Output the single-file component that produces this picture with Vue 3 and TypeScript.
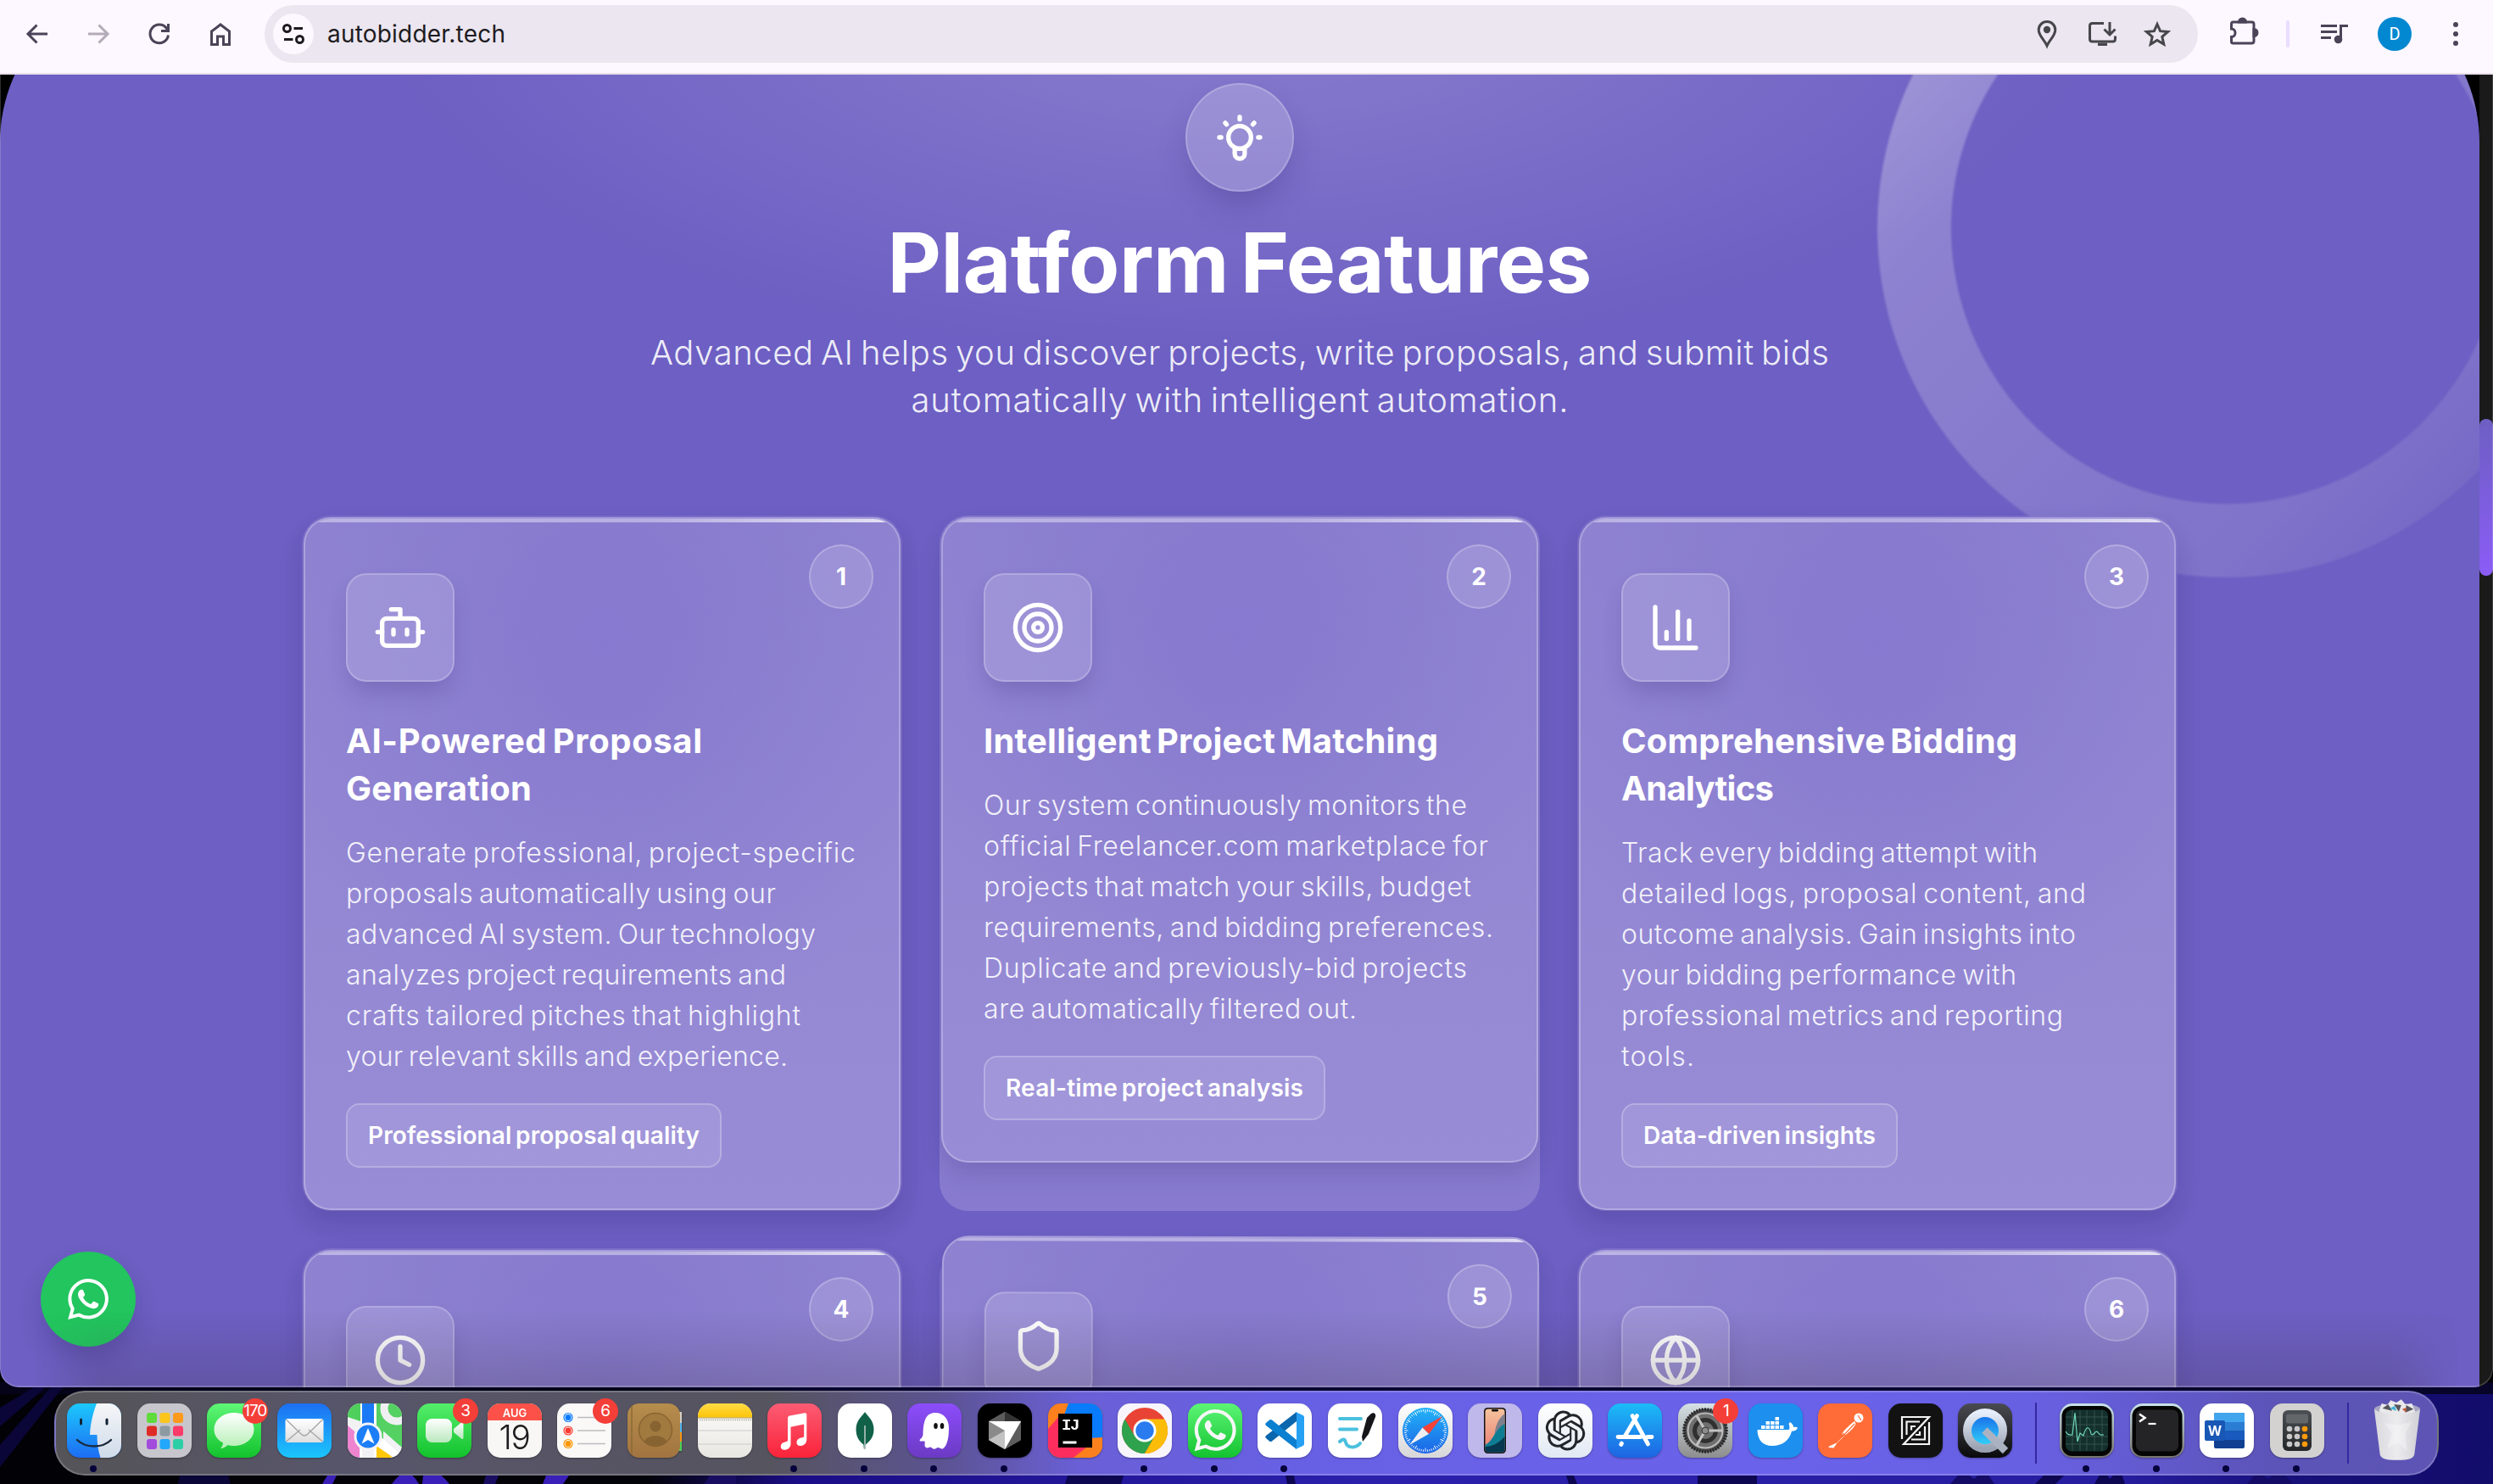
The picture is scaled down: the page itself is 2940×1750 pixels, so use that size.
<script setup lang="ts">
import type { Directive } from 'vue'

interface Line { text: string; width: number }
interface Feature {
  id: number
  icon: string
  title: Line[]
  body: Line[]
  tag?: Line
}
interface DockApp { name: string; art: string; badge?: string; running?: boolean }

// Spreads a line of text over the given width by adjusting its tracking.
const vFit: Directive<HTMLElement, number> = {
  mounted(el, { value }) {
    const count = (el.textContent ?? '').trim().length
    if (count < 2) return
    const spacing = (value - el.getBoundingClientRect().width) / (count - 1)
    el.style.letterSpacing = `${spacing.toFixed(3)}px`
    el.style.marginRight = `${(-spacing).toFixed(3)}px`
  },
}

const features: Feature[] = [
  {
    id: 1,
    icon: '<path d="M12 8V4H8"/><rect width="16" height="12" x="4" y="8" rx="2"/><path d="M2 14h2M20 14h2M15 13v2M9 13v2"/>',
    title: [{ text: 'AI-Powered Proposal', width: 420 }, { text: 'Generation', width: 219 }],
    body: [
      { text: 'Generate professional, project-specific', width: 601 },
      { text: 'proposals automatically using our', width: 507 },
      { text: 'advanced AI system. Our technology', width: 554 },
      { text: 'analyzes project requirements and', width: 519 },
      { text: 'crafts tailored pitches that highlight', width: 536 },
      { text: 'your relevant skills and experience.', width: 521 },
    ],
    tag: { text: 'Professional proposal quality', width: 391 },
  },
  {
    id: 2,
    icon: '<circle cx="12" cy="12" r="10"/><circle cx="12" cy="12" r="6"/><circle cx="12" cy="12" r="2"/>',
    title: [{ text: 'Intelligent Project Matching', width: 536 }],
    body: [
      { text: 'Our system continuously monitors the', width: 570 },
      { text: 'official Freelancer.com marketplace for', width: 595 },
      { text: 'projects that match your skills, budget', width: 575 },
      { text: 'requirements, and bidding preferences.', width: 601 },
      { text: 'Duplicate and previously-bid projects', width: 570 },
      { text: 'are automatically filtered out.', width: 440 },
    ],
    tag: { text: 'Real-time project analysis', width: 351 },
  },
  {
    id: 3,
    icon: '<path d="M3 3v16a2 2 0 0 0 2 2h16"/><path d="M18 17V9M13 17V5M8 17v-3"/>',
    title: [{ text: 'Comprehensive Bidding', width: 467 }, { text: 'Analytics', width: 180 }],
    body: [
      { text: 'Track every bidding attempt with', width: 491 },
      { text: 'detailed logs, proposal content, and', width: 548 },
      { text: 'outcome analysis. Gain insights into', width: 536 },
      { text: 'your bidding performance with', width: 466 },
      { text: 'professional metrics and reporting', width: 521 },
      { text: 'tools.', width: 86 },
    ],
    tag: { text: 'Data-driven insights', width: 274 },
  },
  { id: 4, icon: '<circle cx="12" cy="12" r="10"/><path d="M12 6v6l4 2"/>', title: [], body: [] },
  {
    id: 5,
    icon: '<path d="M20 13c0 5-3.5 7.5-7.66 8.95a1 1 0 0 1-.67-.01C7.5 20.5 4 18 4 13V6a1 1 0 0 1 1-1c2 0 4.5-1.2 6.24-2.72a1.17 1.17 0 0 1 1.52 0C14.51 3.81 17 5 19 5a1 1 0 0 1 1 1z"/>',
    title: [],
    body: [],
  },
  {
    id: 6,
    icon: '<circle cx="12" cy="12" r="10"/><path d="M12 2a14.5 14.5 0 0 0 0 20 14.5 14.5 0 0 0 0-20"/><path d="M2 12h20"/>',
    title: [],
    body: [],
  },
]

const plate = (fill: string, extra = '') => `<rect width="64" height="64" rx="15" fill="${fill}" ${extra}/>`
const grad = (id: string, a: string, b: string) =>
  `<linearGradient id="${id}" x1="0" y1="0" x2="0" y2="1"><stop stop-color="${a}"/><stop offset="1" stop-color="${b}"/></linearGradient>`

const waGlyph =
  '<path d="M17.472 14.382c-.297-.149-1.758-.867-2.03-.967-.273-.099-.471-.148-.67.15-.197.297-.767.966-.94 1.164-.173.199-.347.223-.644.075-.297-.15-1.255-.463-2.39-1.475-.883-.788-1.48-1.761-1.653-2.059-.173-.297-.018-.458.13-.606.134-.133.298-.347.446-.52.149-.174.198-.298.298-.497.099-.198.05-.371-.025-.52-.075-.149-.669-1.612-.916-2.207-.242-.579-.487-.5-.669-.51-.173-.008-.371-.01-.57-.01-.198 0-.52.074-.792.372-.272.297-1.04 1.016-1.04 2.479 0 1.462 1.065 2.875 1.213 3.074.149.198 2.096 3.2 5.077 4.487.709.306 1.262.489 1.694.625.712.227 1.36.195 1.871.118.571-.085 1.758-.719 2.006-1.413.248-.694.248-1.289.173-1.413-.074-.124-.272-.198-.57-.347m-5.421 7.403h-.004a9.87 9.87 0 01-5.031-1.378l-.361-.214-3.741.982.998-3.648-.235-.374a9.86 9.86 0 01-1.51-5.26c.001-5.45 4.436-9.884 9.888-9.884 2.64 0 5.122 1.03 6.988 2.898a9.825 9.825 0 012.893 6.994c-.003 5.45-4.437 9.884-9.885 9.884m8.413-18.297A11.815 11.815 0 0012.05 0C5.495 0 .16 5.335.157 11.892c0 2.096.547 4.142 1.588 5.945L.057 24l6.305-1.654a11.882 11.882 0 005.683 1.448h.005c6.554 0 11.89-5.335 11.893-11.893a11.821 11.821 0 00-3.48-8.413z"/>'

const padColors = ['#5fdb3c', '#fbc51b', '#fb9a1c', '#df2a25', '#8d9aa1', '#fd3b68', '#a24bdc', '#22a7fb', '#2ccfa5']
const launchDots = padColors
  .map((c, i) => `<rect x="${11 + (i % 3) * 15.5}" y="${11 + Math.floor(i / 3) * 15.5}" width="12" height="12" rx="3" fill="${c}"/>`)
  .join('')
const gearTeeth = Array.from({ length: 48 }, (_, i) => `<path d="M32 5v4" transform="rotate(${i * 7.5} 32 32)"/>`).join('')
const safariTicks = Array.from({ length: 60 }, (_, i) => `<path d="M32 7v${i % 5 ? 2.5 : 4.5}" transform="rotate(${i * 6} 32 32)"/>`).join('')
const openaiMark =
  '<path d="M22.282 9.821a5.985 5.985 0 0 0-.516-4.91 6.046 6.046 0 0 0-6.51-2.9A6.065 6.065 0 0 0 4.981 4.18a5.985 5.985 0 0 0-3.998 2.9 6.046 6.046 0 0 0 .743 7.097 5.98 5.98 0 0 0 .51 4.911 6.051 6.051 0 0 0 6.515 2.9A5.985 5.985 0 0 0 13.26 24a6.056 6.056 0 0 0 5.772-4.206 5.99 5.99 0 0 0 3.997-2.9 6.056 6.056 0 0 0-.747-7.073zM13.26 22.43a4.476 4.476 0 0 1-2.876-1.04l.141-.081 4.779-2.758a.795.795 0 0 0 .392-.681v-6.737l2.02 1.168a.071.071 0 0 1 .038.052v5.583a4.504 4.504 0 0 1-4.494 4.494zM3.6 18.304a4.47 4.47 0 0 1-.535-3.014l.142.085 4.783 2.759a.771.771 0 0 0 .78 0l5.843-3.369v2.332a.08.08 0 0 1-.033.062L9.74 19.95a4.5 4.5 0 0 1-6.14-1.646zM2.34 7.896a4.485 4.485 0 0 1 2.366-1.973V11.6a.766.766 0 0 0 .388.676l5.815 3.355-2.02 1.168a.076.076 0 0 1-.071 0l-4.83-2.786A4.504 4.504 0 0 1 2.34 7.872zm16.597 3.855l-5.833-3.387L15.119 7.2a.076.076 0 0 1 .071 0l4.83 2.791a4.494 4.494 0 0 1-.676 8.105v-5.678a.79.79 0 0 0-.407-.667zm2.01-3.023l-.141-.085-4.774-2.782a.776.776 0 0 0-.785 0L9.409 9.23V6.897a.066.066 0 0 1 .028-.061l4.83-2.787a4.5 4.5 0 0 1 6.68 4.66zm-12.64 4.135l-2.02-1.164a.08.08 0 0 1-.038-.057V6.075a4.5 4.5 0 0 1 7.375-3.453l-.142.08L8.704 5.46a.795.795 0 0 0-.393.681zm1.097-2.365l2.602-1.5 2.607 1.5v2.999l-2.597 1.5-2.607-1.5z"/>'
const calcKeys = Array.from({ length: 9 }, (_, i) => `<circle cx="${23 + (i % 3) * 9}" cy="${30 + Math.floor(i / 3) * 9}" r="3.300" fill="${i % 3 === 2 ? '#ff9a0a' : '#c9c9c9'}"/>`).join('')

const mainApps: DockApp[] = [
  {
    name: 'finder',
    running: true,
    art: `<defs>${grad('fi', '#1cc8fd', '#1d6df3')}${grad('fw', '#f6f6f8', '#cfdbea')}<clipPath id="fc"><rect width="64" height="64" rx="15"/></clipPath></defs><g clip-path="url(#fc)"><rect width="64" height="64" fill="url(#fi)"/><path d="M35 0C30 13 27.500 25 27 37h8.500c0 9 1 18 4 27H64V0z" fill="url(#fw)"/></g><path d="M16.500 19v5M47 19v5" stroke="#123" stroke-width="3" stroke-linecap="round"/><path d="M12 43c10 10 30 10 40 0" fill="none" stroke="#1b2a3c" stroke-width="2.400" stroke-linecap="round"/>`,
  },
  { name: 'launchpad', art: plate('#c7c6cd') + launchDots },
  {
    name: 'messages',
    badge: '170',
    art: `<defs>${grad('ms', '#5ff777', '#12c22c')}${grad('mb', '#ffffff', '#b5efb5')}</defs>${plate('url(#ms)')}<path d="M32 11c13 0 23.500 8.500 23.500 19.500S45 50 32 50c-3 0-5-.300-7.500-1-2 2-5 4-8.500 4 2-2.200 3-4 3-6.500C12 43 8.500 37 8.500 30.500 8.500 19.500 19 11 32 11z" fill="url(#mb)"/>`,
  },
  {
    name: 'mail',
    art: `<defs>${grad('ml', '#1d6ff2', '#1bc6fd')}${grad('me', '#ffffff', '#dedede')}</defs>${plate('url(#ml)')}<rect x="9.500" y="18" width="45" height="28" rx="3" fill="url(#me)"/><path d="M10.500 45 27 31M53.500 45 37 31M10.500 19l17.500 17c2.500 2.500 5.500 2.500 8 0l17.500-17" fill="none" stroke="#a5a5a8" stroke-width="1.300"/>`,
  },
  {
    name: 'maps',
    art: `<defs><clipPath id="mp"><rect width="64" height="64" rx="15"/></clipPath></defs><g clip-path="url(#mp)"><rect width="64" height="64" fill="#f2f2f5"/><path d="M0 0h18v22L0 16z" fill="#4fcf5c"/><path d="M0 26l14 12v26H0z" fill="#ee83d0"/><path d="M32 0h10v64L32 50z" fill="#4fcf5c"/><path d="M30 0h34v52L30 22z" fill="#54d162"/><circle cx="58" cy="6" r="15" fill="none" stroke="#f0f0f2" stroke-width="9"/><path d="M33 34l31 28v2H33z" fill="#fff"/><path d="M34 50l20 14H34z" fill="#fdc80a"/><path d="M17 0h14v40H17z" fill="#1a7af5"/><path d="M15 0h2v64h-2zM31 0h3v64h-3z" fill="#fff"/></g><circle cx="24" cy="39" r="15" fill="#1c7ef7" stroke="#f3f3f6" stroke-width="3"/><path d="M24 29l7.500 18.500L24 43l-7.500 4.500z" fill="#fff"/>`,
  },
  {
    name: 'facetime',
    badge: '3',
    art: `<defs>${grad('ft', '#55ee6c', '#12c22c')}${grad('fb', '#ffffff', '#b9e8bd')}</defs>${plate('url(#ft)')}<rect x="10" y="18" width="31" height="28" rx="7.500" fill="url(#fb)"/><path d="M43 30l9-7.500c1.300-1 2.500-.4 2.500 1v17c0 1.500-1.200 2-2.500 1L43 34z" fill="url(#fb)"/>`,
  },
  {
    name: 'calendar',
    art: `<defs><clipPath id="cl"><rect width="64" height="64" rx="15"/></clipPath></defs><g clip-path="url(#cl)"><rect width="64" height="64" fill="#f8f7f5"/><rect width="64" height="20" fill="#fb5148"/></g><text x="32" y="15.500" text-anchor="middle" font-family="Inter, sans-serif" font-weight="600" font-size="13" fill="#fff">AUG</text><text x="31.500" y="54" text-anchor="middle" font-family="Inter, sans-serif" font-weight="300" font-size="39" letter-spacing="-1.500" fill="#1d1d1f">19</text>`,
  },
  {
    name: 'reminders',
    badge: '6',
    art: `${plate('#faf9f8')}<path d="M24 16.500h33M24 32h33M24 47.500h33" stroke="#bdbdbf" stroke-width="1.600"/><g stroke-width="1.200" fill="#fff"><circle cx="13" cy="16.500" r="5" stroke="#0a7bff"/><circle cx="13" cy="32" r="5" stroke="#fb3b30"/><circle cx="13" cy="47.500" r="5" stroke="#fb9500"/></g><circle cx="13" cy="16.500" r="3.500" fill="#0a7bff"/><circle cx="13" cy="32" r="3.500" fill="#fb3b30"/><circle cx="13" cy="47.500" r="3.500" fill="#fb9500"/>`,
  },
  {
    name: 'contacts',
    art: `<path d="M56 10h8v13h-8z" fill="#d5cfc4"/><path d="M56 23h8v11h-8z" fill="#4fb4ee"/><path d="M56 34h8v11h-8z" fill="#f79414"/><path d="M56 45h8v11h-8z" fill="#4bce5a"/><defs>${grad('ct', '#b58d4c', '#a27440')}</defs><rect width="62" height="64" rx="14" fill="url(#ct)"/><path d="M5 3v58" stroke="#8d6a36" stroke-width="1.500"/><g fill="#a17a40" stroke="#8a6531" stroke-width="1.600"><circle cx="33" cy="31" r="19.500"/></g><circle cx="33" cy="27" r="6.500" fill="#876332"/><path d="M20 45c2-9 24-9 26 0-7 7-19 7-26 0z" fill="#876332"/>`,
  },
  {
    name: 'notes',
    art: `<defs><clipPath id="nt"><rect width="64" height="64" rx="15"/></clipPath>${grad('ny', '#ffdb45', '#fcc408')}${grad('nw', '#fcfcfb', '#e9e7e1')}</defs><g clip-path="url(#nt)"><rect width="64" height="64" fill="url(#nw)"/><rect width="64" height="16.500" fill="url(#ny)"/><path d="M0 17h64" stroke="#b09344" stroke-width="1"/><path d="M2 19.500h62" stroke="#9f9f9f" stroke-width="1.600" stroke-dasharray="1.200 1.400"/><path d="M0 32h64M0 48h64" stroke="#cbcbcb" stroke-width="1"/></g>`,
  },
  {
    name: 'music',
    running: true,
    art: `<defs>${grad('mu', '#fb5c74', '#fa2339')}</defs>${plate('url(#mu)')}<path d="M24 17.500c0-1.700.9-2.600 2.300-2.900l17.500-3.400c1.500-.3 2.500.5 2.500 2v29.300c0 4.500-3 7-6.800 7.500-3 .4-5-1.300-5-4 0-2.800 1.800-4.700 5-5.400l2.300-.5c1-.200 1.400-.8 1.400-1.800V24.500L27.500 27.700v20c0 4-2.800 6.600-6.800 7-3 .3-5-1.300-5-4 0-2.800 1.800-4.600 5-5.300l1.800-.4c1-.3 1.500-.8 1.500-1.900z" fill="#fff"/>`,
  },
  {
    name: 'mongodb',
    running: true,
    art: `${plate('#fff')}<path d="M32 10c2 4 10.500 9 10.500 20.500C42.500 41 36 46 32.800 48.500l-.4 5h-1.600l-.4-5C27 46 21.500 41 21.500 30.500 21.500 19 30 14 32 10z" fill="#116149"/><path d="M32 26v28" stroke="#b8c4c2" stroke-width="1.600"/>`,
  },
  {
    name: 'ghostty',
    running: true,
    art: `<defs>${grad('gh', '#8c4dfb', '#6b3ac4')}</defs>${plate('url(#gh)')}<path d="M33 11c9.500 0 16 7 16 18 0 10-1.500 20-6.500 24-2.500 1.700-4-1-6-1s-3.500 2.500-6 1.500c-2-.8-1.500-2-3.500-2-1.500 0-3 1.800-5 .5-2.500-1.700-1-4.500-1.300-7-.6-1.500-5.200.5-6-1-.9-1.800 3.500-3 3.800-7.500C18.900 20 22 11 33 11z" fill="#fff"/><ellipse cx="33.500" cy="26.500" rx="2.300" ry="3.500" fill="#111"/><ellipse cx="41" cy="26.500" rx="2.300" ry="3.500" fill="#111"/>`,
  },
  {
    name: 'cursor',
    running: true,
    art: `${plate('#000')}<path d="M32 10l19 11v22L32 54 13 43V21z" fill="#8a8a8a"/><path d="M32 10l19 11H13z" fill="#5b5b5b"/><path d="M32 10v11h19z" fill="#333"/><path d="M13 21l19 11v22L13 43z" fill="#8a8a8a"/><path d="M13 43l19-11v22z" fill="#c2c2c2"/><path d="M51 21v22L32 54z" fill="#5d5d5d"/><path d="M13 21h38L32 54V32z" fill="#fff"/>`,
  },
  {
    name: 'intellij',
    art: `<defs><clipPath id="ij"><rect width="64" height="64" rx="15"/></clipPath></defs><g clip-path="url(#ij)"><rect width="64" height="64" fill="#fc801d"/><path d="M0 30l14-16 36 34-20 16H0z" fill="#fd2d5e"/><path d="M24 0l-12 32 18 10 34-2V0z" fill="#087cfa"/><path d="M30 64l34-24v24z" fill="#fc801d"/></g><rect x="12" y="12" width="40" height="40" fill="#000"/><path d="M17.500 46h16" stroke="#fff" stroke-width="3"/><text x="16" y="31" font-family="Liberation Mono, monospace" font-weight="700" font-size="19" letter-spacing="-1.500" fill="#fff">IJ</text>`,
  },
  {
    name: 'chrome',
    running: true,
    art: `${plate('#f7f5fb')}<circle cx="32" cy="32" r="27" fill="#e94335"/><path d="M8.600 18.500A27 27 0 0 0 32 59l11.700-20.200L32 32 20.300 38.800z" fill="#2fa24d"/><path d="M32 18.500h23.400A27 27 0 0 1 32 59l11.700-20.200z" fill="#fbbd09"/><circle cx="32" cy="32" r="13.500" fill="#fff"/><circle cx="32" cy="32" r="10.700" fill="#2a7bf0"/>`,
  },
  {
    name: 'whatsapp',
    running: true,
    art: `<defs>${grad('wa', '#5cf575', '#14c330')}</defs>${plate('url(#wa)')}<g transform="translate(7.500 7) scale(2.050)" fill="#f7f7f7">${waGlyph}</g>`,
  },
  {
    name: 'vscode',
    running: true,
    art: `${plate('#fff')}<path d="M46 10v11L17 44.500c-1 .8-2 .8-3 0L10 41c-1-1-1-2 0-3z" fill="#0a66ad"/><path d="M46 54V43L17 19.500c-1-.8-2-.8-3 0L10 23c-1 1-1 2 0 3z" fill="#0b7fd0"/><path d="M44 9.500l9.500 4.500c1 .5 1.500 1.300 1.500 2.500v31c0 1.200-.5 2-1.500 2.500L44 54.500c1.300-1 2-1.500 2-3.500V13c0-2-.7-2.500-2-3.500z" fill="#25a0f3"/>`,
  },
  {
    name: 'freeform',
    art: `${plate('#fff')}<g stroke="#4bc0de" stroke-width="4" stroke-linecap="round" fill="none"><path d="M14 18h25M14 30.500h20"/><path d="M14 45c4-4 6-3 7 1 1.500 6 11 8 17 1"/></g><path d="M51 12c3-2 6 0 5 4l-8 20-7 9-1-6 6-22z" fill="#15151a"/>`,
  },
  {
    name: 'safari',
    art: `<defs>${grad('sf', '#22b4f8', '#1b64e6')}${grad('sp', '#ffffff', '#d7d7d9')}</defs>${plate('url(#sp)')}<circle cx="32" cy="32" r="27" fill="url(#sf)"/><g stroke="#fff" stroke-width=".9">${safariTicks}</g><path d="M52 15L36 36l-7.500-7.500z" fill="#f5423b"/><path d="M13 49l15.500-20.500L36 36z" fill="#f0f0f2"/>`,
  },
  {
    name: 'iphone-mirroring',
    art: `<defs>${grad('ip', '#f5c39c', '#e97b74')}</defs>${plate('#bfb8ea')}<rect x="19" y="5" width="26" height="54" rx="4.500" fill="#111"/><rect x="20.500" y="6.500" width="23" height="51" rx="3.500" fill="url(#ip)"/><path d="M43.500 12v14c-6 3-9 8-12 14 0-12 4-22 12-28z" fill="#7e7f8d"/><path d="M43.500 24v30c0 2-1.500 3.500-3.500 3.500H24c-2 0-3.500-1.500-3.500-3.500v-5C31 43 32 30 43.500 24z" fill="#0e7d93"/><path d="M20.500 51c8 0 16-4 23-12v15c0 2-1.500 3.500-3.500 3.500H24c-2 0-3.500-1.500-3.500-3.500z" fill="#06384f"/><rect x="28" y="7" width="8" height="2.500" rx="1.200" fill="#111"/>`,
  },
  { name: 'chatgpt', art: `<defs>${grad('gp', '#ffffff', '#e2e9f3')}</defs>${plate('url(#gp)')}<g transform="translate(8.500 8.500) scale(1.960)" fill="#22262b">${openaiMark}</g>` },
  {
    name: 'app-store',
    art: `<defs>${grad('as', '#1cbcf8', '#1d63e3')}</defs>${plate('url(#as)')}<g stroke="#fff" stroke-width="4.800" stroke-linecap="round"><path d="M34.500 14.500 20 39M29 14.500 47.500 48M12 39.500h27M47 39.500h5M16.500 47l-.8 1.500"/></g>`,
  },
  {
    name: 'settings',
    badge: '1',
    art: `<defs>${grad('se', '#d5e1e6', '#8d8d8d')}</defs>${plate('url(#se)')}<circle cx="32" cy="32" r="26" fill="#4b4b4d"/><g stroke="#222" stroke-width="1.500">${gearTeeth}</g><circle cx="32" cy="32" r="20.500" fill="#6f6f70" stroke="#b9b9b9" stroke-width="2.200"/><circle cx="32" cy="32" r="12.500" fill="none" stroke="#303030" stroke-width="5"/><g stroke="#c4c4c4" stroke-width="3"><path d="M32 32h20M32 32 22 14.700M32 32 22 49.300"/></g><circle cx="32" cy="32" r="4" fill="#8d8d8d" stroke="#333"/>`,
  },
  {
    name: 'docker',
    art: `${plate('#1d8fee')}<path d="M10.500 31h37c1.500-1.500 1-4.500 0-7l1.500-2c3 2 4 4 4 6 2-.5 4-.2 5 .8-1.500 3-4 4-7 4C48 44 40 50 28 50S10.500 42 10.500 31z" fill="#fff"/><g fill="#fff"><path d="M15 26h4.500v4H15zM20.500 26H25v4h-4.500zM26 26h4.500v4H26zM31.500 26H36v4h-4.500zM37 26h4.500v4H37zM20.500 21H25v4h-4.500zM26 21h4.500v4H26zM31.500 21H36v4h-4.500zM31.500 16H36v4h-4.500z"/></g>`,
  },
  {
    name: 'postman',
    art: `${plate('#ff6c37')}<circle cx="48" cy="17" r="5.500" fill="#fff"/><path d="M43 21c-3 2-12 10-15 15l3 1.500-9 9-9 4-.5 1.500 6 .5 4-6 9.500-9c4-3 11-9 12.500-13.500z" fill="#fff"/><path d="M47 14l4 6M28 40l15-16M32 38l-3-3" stroke="#ff6c37" stroke-width="1.200"/>`,
  },
  {
    name: 'zed',
    art: `${plate('#121212')}<g fill="none" stroke="#f4f4f4" stroke-width="2.200"><path d="M16 42V16h32L18 48h30V22"/><path d="M21.500 37V21.500H37M43 27v15.500H27"/><path d="M27 31.500V27h5M37 33v4h-5"/></g>`,
  },
  {
    name: 'quicktime',
    art: `<defs>${grad('qt', '#4a4b52', '#0a0a0c')}${grad('qr', '#e6eefb', '#9ba3b3')}${grad('qb', '#1565e8', '#35dcfb')}</defs>${plate('url(#qt)')}<circle cx="32" cy="32" r="21" fill="url(#qb)" stroke="url(#qr)" stroke-width="10"/><path d="M31.500 31.500 56 56" stroke="#aab2c1" stroke-width="9"/>`,
  },
]

const recentApps: DockApp[] = [
  {
    name: 'activity-monitor',
    art: `<defs>${grad('am', '#c8e2ea', '#77736c')}</defs>${plate('url(#am)')}<rect x="2.500" y="3" width="59" height="59" rx="12" fill="#050505"/><rect x="7" y="7.500" width="50" height="49" rx="7" fill="#14302d"/><path d="M15 8v48M24 8v48M32 8v48M41 8v48M50 8v48M7 16h50M7 25h50M7 39h50M7 48h50" stroke="#3a5a56" stroke-width=".8"/><path d="M7 33c3 5 5 4 8 4l3-26 3 34 3-10 4 3c3-12 7-12 9-2 3 4 5-6 8-2s3 3 7 3" fill="none" stroke="#6fd8bb" stroke-width="1.200"/>`,
  },
  {
    name: 'terminal',
    art: `<defs>${grad('tm', '#c8e2ea', '#77736c')}</defs>${plate('url(#tm)')}<rect x="2.500" y="3" width="59" height="59" rx="12" fill="#050505"/><rect x="7" y="7.500" width="50" height="49" rx="7" fill="#242426"/><path d="M11 12.500l6.500 4.500-6.500 4.500" fill="none" stroke="#fff" stroke-width="2.600"/><path d="M21.500 24h9" stroke="#fff" stroke-width="2.200"/>`,
  },
  {
    name: 'word',
    art: `${plate('#fff')}<rect x="17" y="11" width="36" height="42" rx="2" fill="#103f91"/><path d="M17 13a2 2 0 0 1 2-2h32a2 2 0 0 1 2 2v9H17z" fill="#41a5ee"/><path d="M17 22h36v10.500H17z" fill="#2b7cd3"/><path d="M17 32.500h36V43H17z" fill="#185abd"/><rect x="6" y="20" width="24" height="24" rx="2" fill="#1857b5"/><text x="18" y="37.500" text-anchor="middle" font-family="Open Sans, sans-serif" font-weight="700" font-size="16" fill="#fff">W</text>`,
  },
  {
    name: 'calculator',
    art: `<defs>${grad('ca', '#4c5054', '#242628')}</defs>${plate('#d3d2d0')}<rect x="15" y="8" width="34" height="48" rx="6" fill="url(#ca)"/><rect x="19" y="12.500" width="26" height="11" rx="2.500" fill="#63676a"/>${calcKeys}`,
  },
]
</script>

<template>
  <div class="screen">
    <svg class="wallpaper" viewBox="0 0 2940 120" preserveAspectRatio="none">
      <defs>
        <linearGradient id="wp" x1="0" x2="1" y1="0" y2="0">
          <stop offset="0" stop-color="#020206" />
          <stop offset=".26" stop-color="#03030a" />
          <stop offset=".32" stop-color="#1b0d86" />
          <stop offset=".55" stop-color="#2a20ac" />
          <stop offset=".85" stop-color="#261d9f" />
          <stop offset=".92" stop-color="#17107a" />
          <stop offset="1" stop-color="#120c6a" />
        </linearGradient>
      </defs>
      <rect width="2940" height="120" fill="url(#wp)" />
      <rect width="2940" height="14" fill="#05041c" opacity=".85" />
      <path d="M0 74 60 6h14L0 100zM0 30l40-24h14L0 52zM210 120l4-20h52l6 20z" fill="#0b0638" />
      <path d="M380 120l12-20h10l-10 20zM462 120q18-26 32 0zM498 120l2-20q18 4 30 20zM640 120l8-20h30l-14 20z" fill="#3a20b8" />
      <path d="M570 120l6-20h16l-8 20zM830 120l14-20h24v20z" fill="#190d62" />
      <path d="M1256 120l6-20h66l-6 20zM1518 120l-4-20h10l4 20zM1850 120l-6-20h8l8 20zM2002 100h70v20h-70zM2400 120l20-20h24l-20 20zM2470 120l10-18 8 12 12-12 6 18z" fill="#0d0650" />
      <path d="M2300 120l14-16 14 10 12-12 12 18zM2650 120l12-14 14 8 12-12 16 18z" fill="#140b66" />
    </svg>

    <div class="window">
      <div class="toolbar">
        <svg class="tool back" viewBox="0 0 24 24"><path d="M11.500 1.500 1 12l10.500 10.500M2 12h22" /></svg>
        <svg class="tool forward" viewBox="0 0 24 24"><path d="M12.500 1.500 23 12 12.500 22.500M22 12H0" /></svg>
        <svg class="tool reload" viewBox="0 0 24 24"><path d="M22.500 13.500A10.800 10.800 0 1 1 20.500 5.500L22.500 8M22.500 0v8.500H14" /></svg>
        <svg class="tool home" viewBox="0 0 24 27"><path d="M1.500 25.500V10L12 2l10.500 8v15.500H15.500V16h-7v9.500z" /></svg>
        <div class="omnibox">
          <span class="site-info">
            <svg viewBox="0 0 26 24"><circle cx="5.500" cy="5.500" r="4" /><path d="M13.500 5.500H24" /><circle cx="20.500" cy="18.500" r="4" /><path d="M2 18.500h10.500" /></svg>
          </span>
          <span v-fit="210" class="url">autobidder.tech</span>
          <span class="omni-icons">
            <svg width="24" height="32" viewBox="0 0 24 32"><path d="M12 1.500c5.500 0 9.800 4.300 9.800 9.700C21.800 18 15 23 12 30 9 23 2.200 18 2.200 11.200c0-5.400 4.300-9.700 9.800-9.700z" /><circle cx="12" cy="11" r="4.200" fill="currentColor" stroke="none" /></svg>
            <svg width="34" height="28" viewBox="0 0 34 28"><path d="M19 1.500H5.500c-2 0-3 1-3 3v15.500c0 2 1 3 3 3h24c2 0 3-1 3-3V16.500" /><path d="M26 0v14M19.500 8.500 26 15l6.500-6.500" /><path d="M12 24.500h11V28H12z" fill="currentColor" stroke="none" /></svg>
            <svg width="32" height="30" viewBox="0 0 32 30"><path d="M16 3.500l3.600 8.200 9 .8-6.800 5.900 2 8.700-7.800-4.600-7.800 4.600 2-8.700-6.800-5.900 9-.8z" /></svg>
          </span>
        </div>
        <svg class="puzzle" width="34" height="34" viewBox="0 0 34 34"><path d="M4.500 6h22c1.500 0 2.500 1 2.500 2.500v20c0 1.500-1 2.500-2.500 2.500h-22C3 31 2.500 30.500 2.500 29v-5.500c6 0 6-9.500 0-9.500V8.500C2.500 7 3 6 4.500 6z" /><path d="M11.500 6a4 4 0 0 1 8 0zM29 14.500a4 4 0 0 1 0 8z" fill="currentColor" /></svg>
        <span class="divider"></span>
        <svg class="queue" width="32" height="24" viewBox="0 0 32 24"><path d="M0 2.500h19M0 9.500h19M0 16.500h12M23.500 18V2.500H32" /><circle cx="20.500" cy="18.500" r="4.800" fill="currentColor" stroke="none" /></svg>
        <span class="avatar">D</span>
        <span class="kebab"><i></i><i></i><i></i></span>
      </div>

      <div class="viewport">
        <section class="features">
          <div class="ring"></div>
          <header class="intro">
            <span class="intro-icon">
              <svg viewBox="0 0 24 24" fill="none" stroke="#fff" stroke-width="2" stroke-linecap="round" stroke-linejoin="round">
                <circle cx="12" cy="12" r="5" />
                <path d="M9.800 17v2.200a2.200 2.200 0 0 0 4.400 0V17zM12 3v1M5.600 5.600l.6.700M18.400 5.600l-.6.700M3 12h.8M20.200 12h.8" />
              </svg>
            </span>
            <h2><span v-fit="831">Platform Features</span></h2>
            <p>
              <span v-fit="1390">Advanced AI helps you discover projects, write proposals, and submit bids</span>
              <span v-fit="775">automatically with intelligent automation.</span>
            </p>
          </header>

          <div class="grid">
            <div v-for="f in features" :key="f.id" class="cell">
              <article class="card" :class="`card-${f.id}`">
                <span class="number">{{ f.id }}</span>
                <span class="icon-box"><svg viewBox="0 0 24 24" v-html="f.icon"></svg></span>
                <h3 v-if="f.title.length"><span v-for="l in f.title" :key="l.text" v-fit="l.width">{{ l.text }}</span></h3>
                <p v-if="f.body.length"><span v-for="l in f.body" :key="l.text" v-fit="l.width">{{ l.text }}</span></p>
                <div v-if="f.tag" class="tag"><span v-fit="f.tag.width">{{ f.tag.text }}</span></div>
              </article>
            </div>
          </div>
        </section>
        <div class="scrollbar"><div class="thumb"></div></div>
        <div class="chat"><svg viewBox="0 0 24 24" v-html="waGlyph"></svg></div>
        <div class="dock-shade"></div>
      </div>
    </div>

    <div class="dock">
      <div v-for="a in mainApps" :key="a.name" class="slot">
        <svg class="app" viewBox="0 0 64 64" v-html="a.art"></svg>
        <b v-if="a.badge" class="badge">{{ a.badge }}</b>
        <i v-if="a.running" class="dot"></i>
      </div>
      <span class="rule"></span>
      <div v-for="a in recentApps" :key="a.name" class="slot">
        <svg class="app" viewBox="0 0 64 64" v-html="a.art"></svg>
        <i class="dot"></i>
      </div>
      <span class="rule"></span>
      <svg class="trash" viewBox="0 0 60 76">
        <defs><linearGradient id="tr" x1="0" x2="1" y1="0" y2="0"><stop stop-color="#d9d9de" /><stop offset=".5" stop-color="#ececee" /><stop offset="1" stop-color="#cfcfd6" /></linearGradient></defs>
        <ellipse cx="30" cy="13" rx="28" ry="7" fill="#a7a5c4" />
        <path d="M8 15l3-9 7 2 4-6 7 3 6-4 5 6 8-1 4 10-9 6H14z" fill="#e9e9ec" />
        <path d="M12 12l7-5 5 8zM26 7l9 1-3 8zM41 8l9 5-10 4z" fill="#55555c" />
        <path d="M21 12l6-3 2 6z" fill="#3bb2d6" /><path d="M36 13l5-2v6z" fill="#c55a3a" />
        <path d="M2 13c8 8 48 8 56 0l-7 55c-1 5-6 7-21 7S10 73 9 68z" fill="url(#tr)" />
        <path d="M14 30l10 12-6 18 14-6 10 10-2-22 8-14-14 4z" fill="#fff" opacity=".3" />
      </svg>
    </div>
  </div>
</template>

<style>
body { overflow: hidden; background: #000; }
</style>

<style scoped>
* { box-sizing: border-box; }
.screen {
  position: relative;
  width: 2940px;
  height: 1750px;
  overflow: hidden;
  background: #000;
  font-family: Inter, "Open Sans", sans-serif;
  display: flex;
  flex-direction: column;
}
.wallpaper { position: absolute; left: 0; bottom: 0; width: 2940px; height: 120px; }
.window {
  position: relative;
  height: 1636px;
  flex: none;
  border-radius: 0 0 22px 22px;
  overflow: hidden;
  background: #000;
}
.window::after {
  content: "";
  position: absolute;
  inset: 0;
  border-radius: 0 0 22px 22px;
  box-shadow: inset 0 -1px 0 1px rgba(255, 255, 255, .18);
  pointer-events: none;
  clip-path: inset(88px 0 0 0);
}

/* Browser toolbar */
.toolbar {
  height: 88px;
  background: #fdf7ff;
  border-bottom: 2px solid #e9e0ec;
  display: flex;
  align-items: center;
  padding: 0 0 6px 32px;
  color: #4a4458;
}
.toolbar svg { fill: none; stroke: currentColor; stroke-width: 3; flex: none; overflow: visible; }
.tool { width: 24px; height: 24px; margin-right: 48px; }
.forward { color: #b3abb8; }
.home { height: 27px; margin-right: 40px; }
.omnibox {
  width: 2280px;
  height: 68px;
  border-radius: 34px;
  background: #ece6f0;
  display: flex;
  align-items: center;
  padding: 0 32px 0 10px;
  flex: none;
  color: #46464b;
}
.site-info {
  width: 48px;
  height: 48px;
  border-radius: 50%;
  background: #fdf7ff;
  display: flex;
  align-items: center;
  justify-content: center;
  margin-right: 16px;
  color: #1d1b20;
}
.site-info svg { width: 26px; height: 24px; }
.url { font-size: 28px; color: #1d1b20; white-space: nowrap; }
.omni-icons { margin-left: auto; display: flex; align-items: center; gap: 32px; }
.omni-icons svg:first-child { margin-right: 4px; }
.puzzle { margin: -6px 0 0 37px; }
.divider { width: 4px; height: 32px; border-radius: 2px; background: #eaddff; margin-left: 33px; }
.queue { margin-left: 37px; }
.avatar {
  width: 40px;
  height: 40px;
  border-radius: 50%;
  background: #0288d1;
  color: #fff;
  font: 400 20px/40px Roboto, sans-serif;
  text-align: center;
  margin-left: 35px;
}
.kebab { display: flex; flex-direction: column; gap: 5px; margin-left: 49px; }
.kebab i { width: 6px; height: 6px; border-radius: 50%; background: currentColor; }

/* Page */
.viewport { position: relative; height: 1548px; display: flex; align-items: flex-start; overflow: hidden; background: #000; }
.features {
  position: relative;
  width: 2924px;
  height: 1660px;
  margin-top: -112px;
  padding-top: 122px;
  border-radius: 192px 192px 0 0;
  overflow: hidden;
  flex: none;
  background: radial-gradient(1040px 450px at 1462px 0, rgba(255, 255, 255, .2), rgba(255, 255, 255, 0)), #6d5fc3;
}
.ring {
  position: absolute;
  left: 2212px;
  top: -121px;
  width: 828px;
  height: 828px;
  border-radius: 50%;
  background: linear-gradient(135deg, rgba(255, 255, 255, .36) 5%, rgba(255, 255, 255, .22) 30%, rgba(255, 255, 255, .12) 75%, rgba(255, 255, 255, 0) 100%);
  mask: radial-gradient(circle, transparent 323px, #000 327px, #000 410px, transparent 414px);
}
.intro { position: relative; display: flex; flex-direction: column; align-items: center; color: #fff; text-align: center; }
.intro-icon {
  width: 128px;
  height: 128px;
  border-radius: 50%;
  border: 2px solid rgba(255, 255, 255, .2);
  background: rgba(255, 255, 255, .2);
  box-shadow: 0 20px 40px -8px rgba(40, 25, 100, .28);
  display: flex;
  align-items: center;
  justify-content: center;
}
.intro-icon svg { width: 64px; height: 64px; }
h2, .intro p, h3, .card p, .tag { word-spacing: -.09em; font-variant-ligatures: none; }
h2 { margin: 24px 0 0; font-size: 98px; line-height: 120px; font-weight: 700; white-space: nowrap; }
h2 span, .intro p span, h3 span, .card p span, .tag span { display: inline-block; white-space: nowrap; }
.intro p {
  margin: 18px 0 0;
  font-size: 40px;
  line-height: 56px;
  font-weight: 330;
  color: rgba(255, 255, 255, .9);
  display: flex;
  flex-direction: column;
  align-items: center;
}
.grid { position: relative; display: grid; grid-template-columns: repeat(3, 704px); gap: 48px; justify-content: center; margin-top: 110px; }
.cell { position: relative; height: 816px; border-radius: 34px; }
.cell::before {
  content: "";
  position: absolute;
  inset: -2px;
  border-radius: 34px;
  background: #887bcf;
  opacity: .6;
  box-shadow: 0 16px 36px rgba(40, 25, 110, .12);
}
.cell:nth-child(2)::before { opacity: 1; box-shadow: none; }
.card {
  position: relative;
  min-height: 100%;
  border-radius: 32px;
  border: 2px solid rgba(255, 255, 255, .26);
  padding: 64px 48px 48px;
  display: flex;
  flex-direction: column;
  align-items: flex-start;
  color: #fff;
  overflow: hidden;
  background:
    radial-gradient(60% 60% at 50% 18%, rgba(130, 116, 205, .7), rgba(130, 116, 205, 0)),
    linear-gradient(180deg, #8f83d1, #988cd6);
  background-origin: border-box;
  box-shadow: 0 14px 24px rgba(40, 25, 90, .12);
}
.card::before {
  content: "";
  position: absolute;
  left: 0;
  right: 0;
  top: 0;
  height: 4px;
  background: linear-gradient(90deg, rgba(255, 255, 255, .4), rgba(255, 255, 255, .4) 60%, rgba(255, 255, 255, .75) 97%);
}
.card-2 { min-height: 0; box-shadow: 0 14px 30px -4px rgba(40, 25, 90, .2); }
.card-5 { transform: translateY(-16px) rotate(.15deg); }
.number {
  position: absolute;
  right: 30px;
  top: 30px;
  width: 76px;
  height: 76px;
  border-radius: 50%;
  border: 2px solid rgba(255, 255, 255, .22);
  background: rgba(255, 255, 255, .14);
  font-size: 28px;
  font-weight: 700;
  line-height: 72px;
  text-align: center;
}
.icon-box {
  width: 128px;
  height: 128px;
  border-radius: 24px;
  border: 2px solid rgba(255, 255, 255, .2);
  background: rgba(255, 255, 255, .15);
  box-shadow: 0 16px 28px -6px rgba(50, 35, 110, .24);
  display: flex;
  align-items: center;
  justify-content: center;
  flex: none;
}
.icon-box svg { width: 64px; height: 64px; fill: none; stroke: #fff; stroke-width: 2; stroke-linecap: round; stroke-linejoin: round; }
h3 { margin: 42px 0 0; font-size: 40px; line-height: 56px; font-weight: 700; display: flex; flex-direction: column; align-items: flex-start; }
.card p { margin: 24px 0 0; font-size: 32px; line-height: 48px; font-weight: 330; color: rgba(255, 255, 255, .9); display: flex; flex-direction: column; align-items: flex-start; }
.tag {
  margin-top: 31px;
  height: 76px;
  padding: 0 24px;
  border: 2px solid rgba(255, 255, 255, .22);
  border-radius: 16px;
  background: rgba(255, 255, 255, .1);
  font-size: 28px;
  line-height: 72px;
  font-weight: 600;
}
.scrollbar { width: 16px; height: 1548px; background: #1a1a1a; padding-top: 406px; flex: none; }
.thumb { height: 185px; border-radius: 8px; background: linear-gradient(#6d5fc3, #8b5cf6); }
.chat {
  position: absolute;
  left: 48px;
  top: 1388px;
  width: 112px;
  height: 112px;
  border-radius: 50%;
  background: #22c55e;
  display: flex;
  align-items: center;
  justify-content: center;
  box-shadow: 0 16px 30px -4px rgba(30, 20, 80, .25);
}
.chat svg { width: 48px; height: 48px; fill: #fff; }
.dock-shade {
  position: absolute;
  left: 40px;
  right: 40px;
  bottom: 0;
  height: 90px;
  background: linear-gradient(rgba(60, 50, 60, 0), rgba(60, 50, 60, .22));
  mask: linear-gradient(90deg, transparent, #000 80px, #000 calc(100% - 80px), transparent);
}

/* Dock */
.dock {
  position: relative;
  margin: 4px 0 0 64px;
  width: 2812px;
  height: 100px;
  border-radius: 36px;
  border: 2px solid rgba(255, 255, 255, .2);
  background: linear-gradient(90deg, #555457, #57556a 12%, #56545f 30%, #5b5390 37%, #6a5fd6 43%, #6860e4 52%, #6a62ea 72%, #6860e2 83%, #5c54b8 93%, #5d54b4);
  display: flex;
  padding-left: 4px;
}
.slot { position: relative; width: 82.600px; height: 96px; display: flex; justify-content: center; flex: none; }
.app { width: 64px; height: 64px; margin-top: 13px; filter: drop-shadow(0 1px 1px rgba(0, 0, 0, .3)); }
.badge {
  position: absolute;
  right: 2px;
  top: 7px;
  min-width: 30px;
  height: 30px;
  border-radius: 15px;
  background: #f43e38;
  color: #fff;
  font-size: 19px;
  font-weight: 400;
  line-height: 30px;
  text-align: center;
  letter-spacing: -1px;
  padding: 0 1px;
}
.dot { position: absolute; left: 50%; bottom: 2px; width: 8px; height: 8px; margin-left: -5px; border-radius: 50%; background: #06033c; }
.rule { width: 2px; height: 72px; margin: 12px 17.500px 0; background: #33289f; flex: none; }
.trash { width: 58px; height: 74px; margin: 7px 0 0 11px; }
</style>
